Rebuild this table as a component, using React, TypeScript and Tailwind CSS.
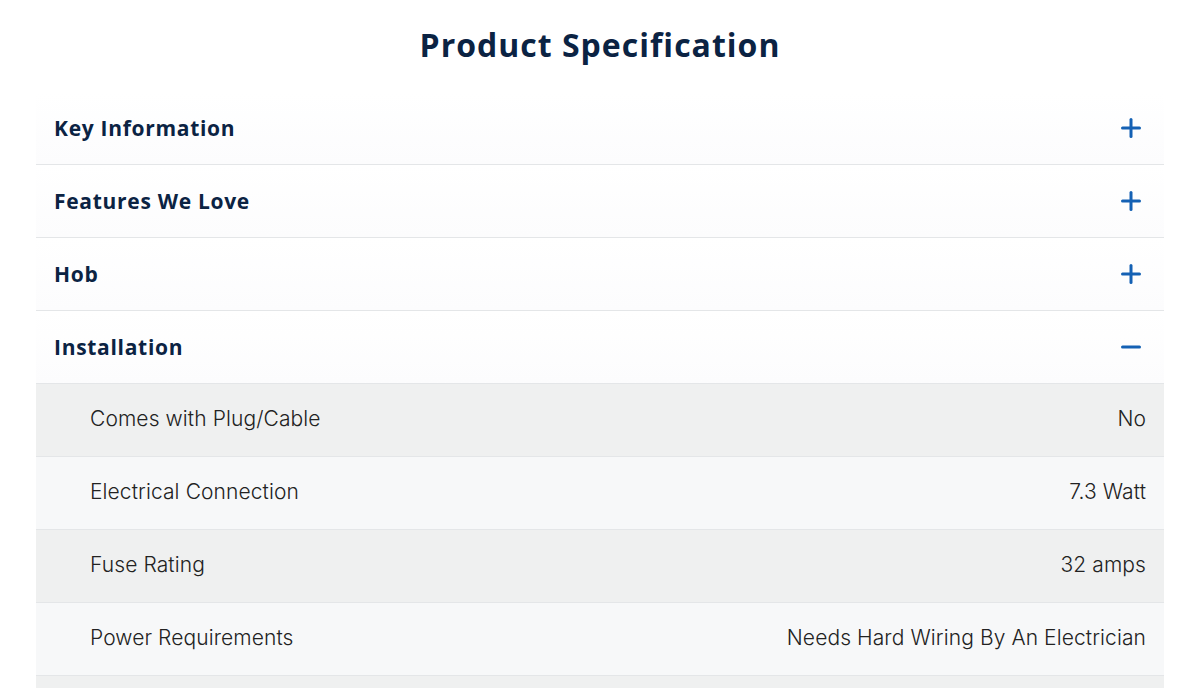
import { useState } from 'react';

type Spec = { label: string; value: string };

const sections: { title: string; specs: Spec[] }[] = [
  { title: 'Key Information', specs: [] },
  { title: 'Features We Love', specs: [] },
  { title: 'Hob', specs: [] },
  {
    title: 'Installation',
    specs: [
      { label: 'Comes with Plug/Cable', value: 'No' },
      { label: 'Electrical Connection', value: '7.3 Watt' },
      { label: 'Fuse Rating', value: '32 amps' },
      { label: 'Power Requirements', value: 'Needs Hard Wiring By An Electrician' },
    ],
  },
];

function Toggle({ open }: { open: boolean }) {
  return (
    <svg width="20" height="20" viewBox="0 0 20 20" className="text-[#1461b4]">
      <path d="M1.5 10h17" stroke="currentColor" strokeWidth="3" strokeLinecap="round" />
      {!open && <path d="M10 1.5v17" stroke="currentColor" strokeWidth="3" strokeLinecap="round" />}
    </svg>
  );
}

export default function App() {
  const [open, setOpen] = useState<string | null>('Installation');

  return (
    <div className="min-h-screen bg-white px-9 font-['Inter',sans-serif]">
      <h1 className="pt-[25px] pb-[27px] text-center font-['Open_Sans',sans-serif] text-[32px] leading-[40px] font-bold tracking-[1px] text-[#0b2343]">
        Product Specification
      </h1>
      <div>
        {sections.map((s) => {
          const isOpen = open === s.title;
          return (
            <div key={s.title} className="border-b border-[#e4e6e8]">
              <button
                onClick={() => setOpen(isOpen ? null : s.title)}
                className="flex h-[72px] w-full items-center justify-between bg-gradient-to-b from-white to-[#fcfcfd] pr-[23px] pl-[18px] text-left"
              >
                <span className="pt-[2px] font-['Open_Sans',sans-serif] text-[21px] font-bold tracking-[0.7px] text-[#0b2343]">
                  {s.title}
                </span>
                <Toggle open={isOpen} />
              </button>
              {isOpen && (
                <>
                  {s.specs.map((sp, i) => (
                    <div
                      key={sp.label}
                      className="flex h-[73px] items-center justify-between border-t border-[#e4e6e8] pr-[18px] pb-[3px] pl-[54px] text-[21px] font-light tracking-[0.1px] text-[#222]"
                      style={{ background: i % 2 === 0 ? '#eff0f0' : '#f7f8f9' }}
                    >
                      <span>{sp.label}</span>
                      <span>{sp.value}</span>
                    </div>
                  ))}
                  <div className="h-[40px] border-t border-[#e4e6e8] bg-[#eff0f0]" />
                </>
              )}
            </div>
          );
        })}
      </div>
    </div>
  );
}
